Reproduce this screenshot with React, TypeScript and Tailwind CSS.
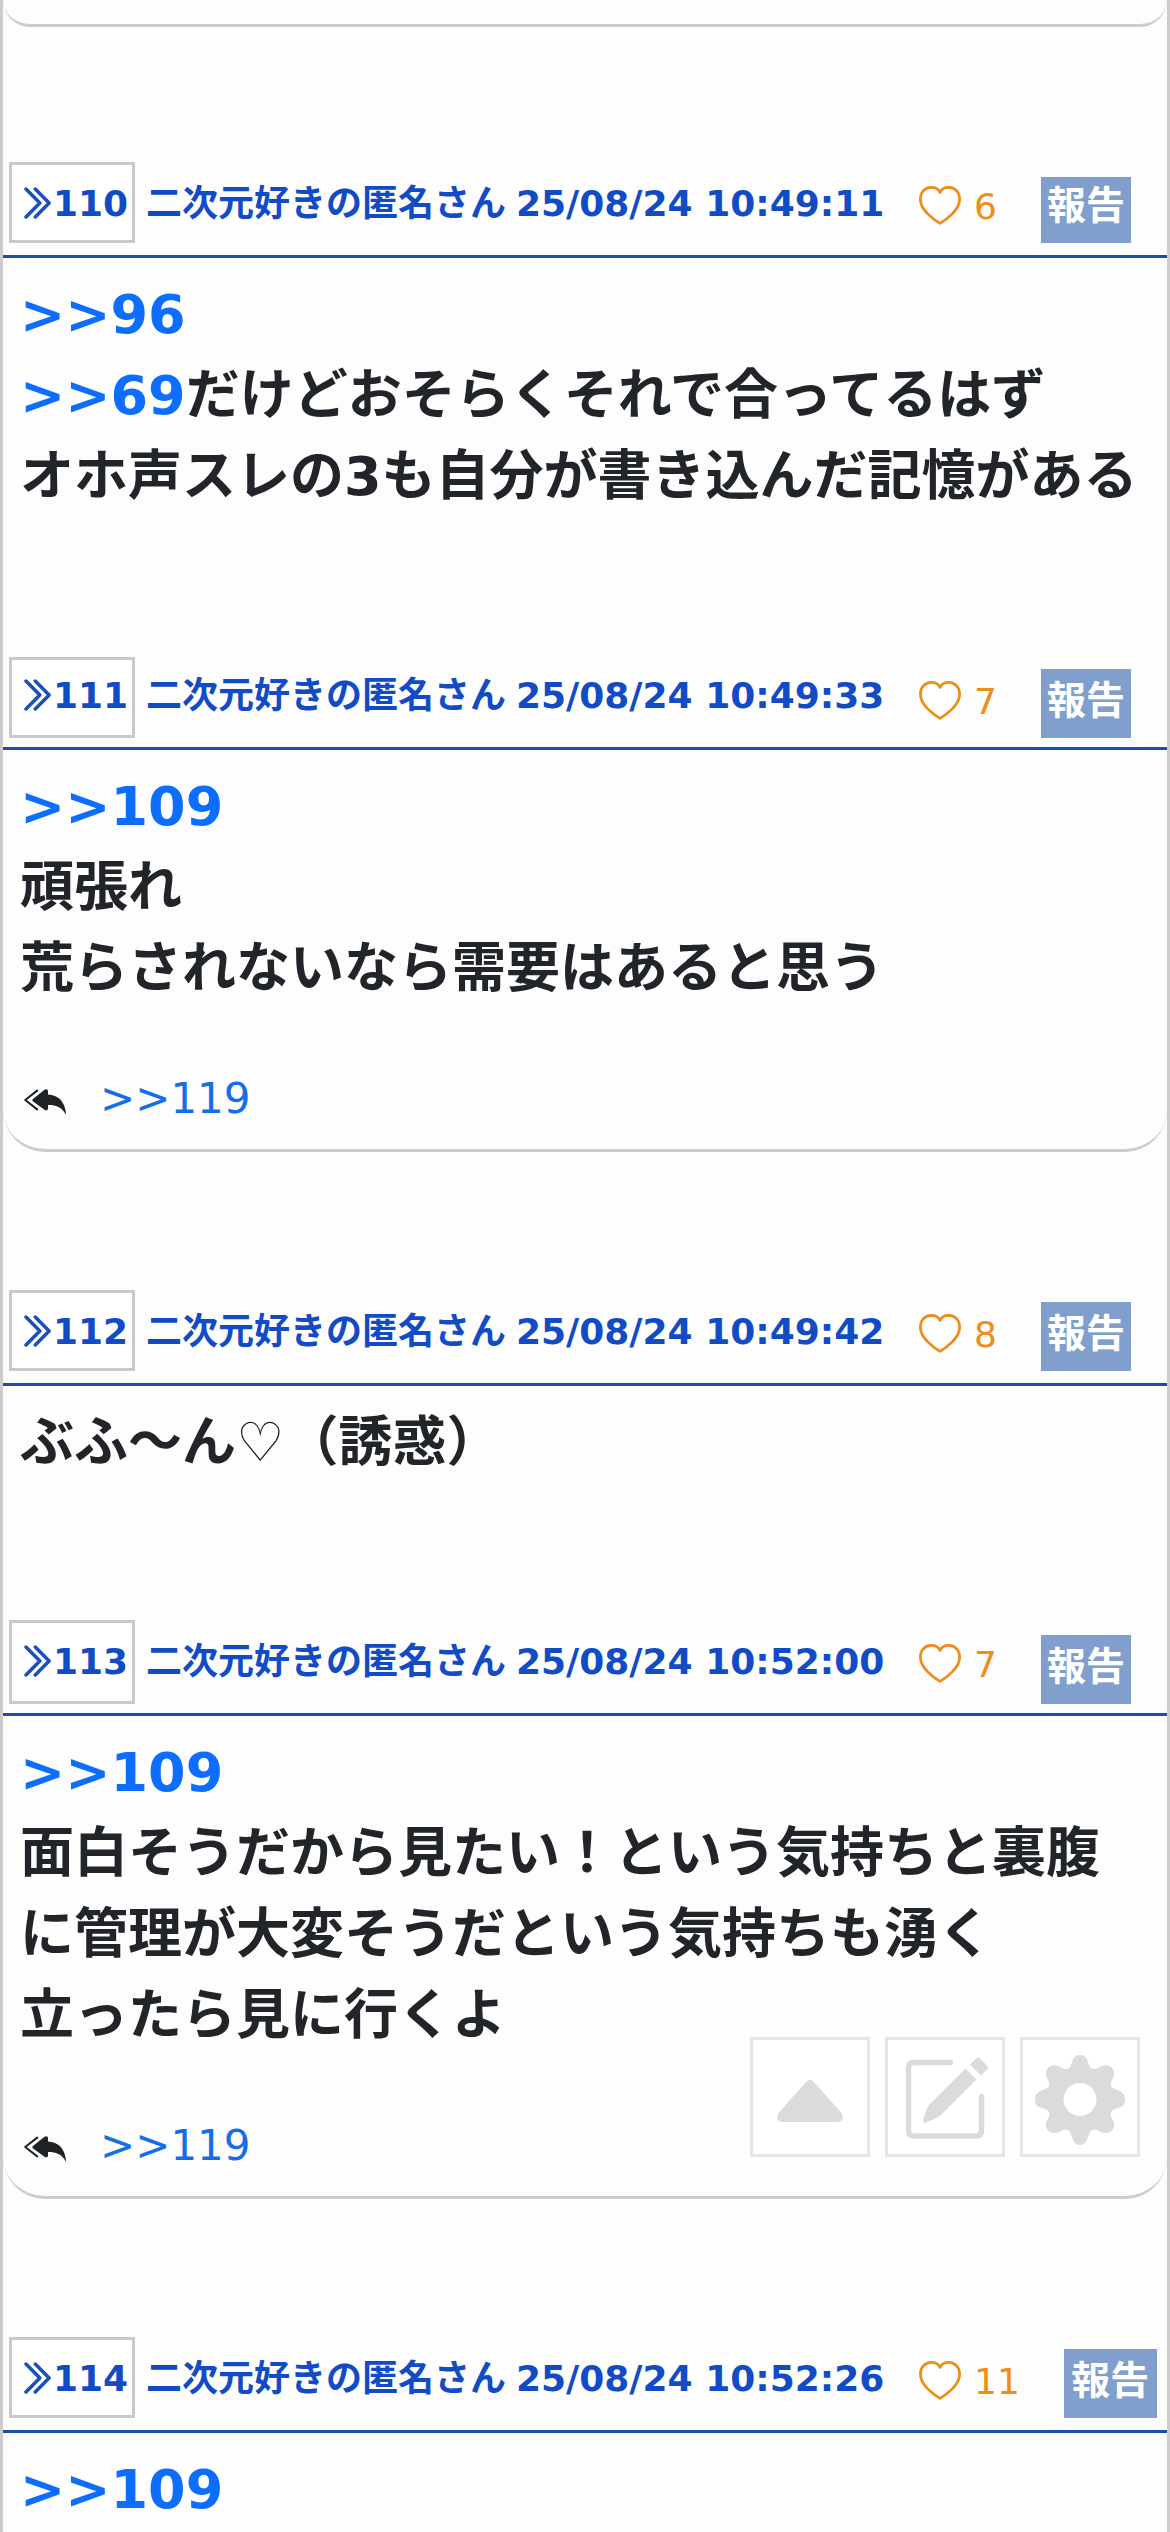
import type { ReactNode } from 'react'

interface PostProps {
  id: number
  time: string
  likes: number
  headerClass?: string
  numberClass?: string
  likesClass?: string
  reportClass?: string
  bodyClass: string
  reply?: string
  children: ReactNode
}

function ChevronsIcon() {
  return (
    <svg className="h-[32px] w-[27px] shrink-0" viewBox="0 0 27 32" fill="none" stroke="#1a50b8" strokeWidth="3.5" strokeLinecap="round" strokeLinejoin="round">
      <path d="M2 2L15.8 16L2 30" />
      <path d="M11.3 2L25.1 16L11.3 30" />
    </svg>
  )
}

function HeartIcon() {
  return (
    <svg className="h-[39px] w-[42px]" viewBox="0 0 42 39" fill="#fff" stroke="#ec8e17" strokeWidth="2.8" strokeLinejoin="round">
      <path d="M21 37.4C14.5 33.5 1.4 24 1.4 13.2C1.4 5.5 6.5 1.4 12.4 1.4C16.5 1.4 19.4 3 21 6.3C22.6 3 25.5 1.4 29.6 1.4C35.5 1.4 40.6 5.5 40.6 13.2C40.6 24 27.5 33.5 21 37.4Z" />
    </svg>
  )
}

function ReplyAllIcon() {
  return (
    <svg className="h-[27px] w-[43px]" viewBox="0 0 43 27">
      <path d="M13.2 1.6L1.2 11L13.2 20.4" fill="none" stroke="#1f2326" strokeWidth="2" strokeLinecap="round" strokeLinejoin="round" />
      <path d="M8.8 12.2Q7.8 11 9 10L20.5 .8Q23.8 -1 24 2.2V5.6C34 6 41 12 42.2 26C38 18.5 33 16 24 16V19.5Q23.6 22.5 20.5 20.8Z" fill="#1f2326" />
    </svg>
  )
}

function Post({
  id,
  time,
  likes,
  headerClass = '',
  numberClass = 'h-[81px] pt-[12px]',
  likesClass = 'mt-[24px]',
  reportClass = 'mt-[12px] h-[69px] w-[90px] leading-[63px]',
  bodyClass,
  reply,
  children,
}: PostProps) {
  return (
    <article className={`border-[#ccc] ${reply ? 'rounded-b-[42px] border-b-[3px]' : ''}`}>
      <header className={`flex h-[96px] items-start border-b-[3px] border-[#1c4dab] pl-1.5 text-[36px] ${headerClass}`}>
        <div className={`flex w-[126px] shrink-0 items-start border-[3px] border-[#c9c9c9] bg-white pl-3 font-bold leading-[54px] text-[#114bc5] ${numberClass}`}>
          <div className="pt-2.5"><ChevronsIcon /></div>
          <span className="ml-0.5">{id}</span>
        </div>
        <div className="mt-[15px] flex w-[784px] shrink-0 gap-2.5 whitespace-nowrap pl-[11px] font-bold leading-[54px] text-[#114bc5]">
          <span>二次元好きの匿名さん</span>
          <time>{time}</time>
        </div>
        <div className={`flex items-start leading-[42px] text-[#ec8e17] ${likesClass}`}>
          <HeartIcon />
          <span className="ml-[13px]">{likes}</span>
        </div>
        <a className={`ml-[44px] shrink-0 bg-[#809fcd] text-center text-[39px] font-bold text-white ${reportClass}`}>報告</a>
      </header>
      <div className={`pl-[17px] pt-4 text-[54px] font-bold leading-[81px] text-[#212529] ${bodyClass}`}>{children}</div>
      {reply && (
        <div className="flex h-[81px] items-start pl-[21px] text-[42px] leading-[61px] text-[#146ee8]">
          <div className="pt-[21px]"><ReplyAllIcon /></div>
          <a className="ml-[33px]">{reply}</a>
        </div>
      )}
    </article>
  )
}

function Ref({ children }: { children: ReactNode }) {
  return <a className="text-[#0d6efd]">{children}</a>
}

function ToolButton({ children }: { children: ReactNode }) {
  return (
    <button type="button" className="flex size-[120px] items-center justify-center border-[3px] border-[#e5e5e5] bg-white">
      {children}
    </button>
  )
}

function FloatingTools() {
  return (
    <nav className="fixed left-[750px] top-[2037px] flex gap-[15px]">
      <ToolButton>
        <svg className="size-[114px]" viewBox="0 0 114 114" fill="#dbdbdb">
          <path d="M53.5 41.5Q57 38 60.5 41.5L88 72.5Q93 80.5 85 82H29Q21 80.5 26 72.5Z" />
        </svg>
      </ToolButton>
      <ToolButton>
        <svg className="size-[114px]" viewBox="0 0 114 114" fill="#dbdbdb">
          <path d="M62.5 22.5H26Q20.5 22.5 20.5 28V90.5Q20.5 96 26 96H88Q93.5 96 93.5 90.5V56.5" fill="none" stroke="#dbdbdb" strokeWidth="5.5" strokeLinecap="round" />
          <path d="M77.5 28.5L88.5 39.5L52 76Q46 79.5 36.5 83Q34.5 82.5 35 81C37 73.5 38.5 68.5 41.5 64.5Z" />
          <path d="M82 24.5L88 18.5Q90 16.5 92 18.5L98.5 25Q101 27.5 99 29.5L93 35.5Z" />
        </svg>
      </ToolButton>
      <ToolButton>
        <svg className="size-[114px]" viewBox="0 0 114 114">
          <path
            fill="#dbdbdb"
            d="M57 15C63 15 64.5 19.5 65.5 23.5C67 29 71 30.5 76 27.5C80 25 85 24 89 28C92 31.5 91.5 36 89 40C86 45 88 48 93 49.5C98 51 102 53 102 60C102 66 98 67 94 68.5C88 70 86 73.5 89 78.5C92 83 92 87 89 90.5C85 94 80 93.5 76 91C71 88 67 90 65.5 95.5C64 100 62 105 57 105C52 105 50 100 48.5 95.5C47 90 43 88 38 91C34 93.5 29 94 25 90.5C22 87 22 83 25 78.5C28 73.5 26 70 20 68.5C16 67 12 66 12 60C12 53 16 51 21 49.5C26 48 28 45 25 40C22.5 36 22 31.5 25 28C29 24 34 25 38 27.5C43 30.5 47 29 48.5 23.5C49.5 19.5 51 15 57 15Z"
          />
          <circle cx="57" cy="59.5" r="16.5" fill="#fff" />
        </svg>
      </ToolButton>
    </nav>
  )
}

export default function App() {
  return (
    <div lang="ja" className="h-[2532px] overflow-hidden border-x-[3px] border-[#ccc] bg-[#fdfdfd] font-['DejaVu_Sans','Noto_Sans_CJK_JP',sans-serif]">
      <div className="h-[27px] rounded-b-[42px] border-b-[3px] border-[#ccc]" />

      <Post
        id={110}
        time="25/08/24 10:49:11"
        likes={6}
        headerClass="mt-[135px]"
        reportClass="mt-[15px] h-[66px] w-[90px] leading-[57px]"
        bodyClass="h-[396px]"
      >
        <Ref>&gt;&gt;96</Ref><br />
        <Ref>&gt;&gt;69</Ref>だけどおそらくそれで合ってるはず<br />
        オホ声スレの3も自分が書き込んだ記憶がある
      </Post>

      <Post
        id={111}
        time="25/08/24 10:49:33"
        likes={7}
        numberClass="mt-[3px] h-[81px] pt-[9px]"
        likesClass="mt-[27px]"
        reportClass="mt-[15px] h-[69px] w-[90px] leading-[63px]"
        bodyClass="h-[318px]"
        reply=">>119"
      >
        <Ref>&gt;&gt;109</Ref><br />
        頑張れ<br />
        荒らされないなら需要はあると思う
      </Post>

      <Post id={112} time="25/08/24 10:49:42" likes={8} headerClass="mt-[138px]" bodyClass="h-[234px]">
        ぶふ～ん♡（誘惑）
      </Post>

      <Post
        id={113}
        time="25/08/24 10:52:00"
        likes={7}
        numberClass="h-[84px] pt-[12px]"
        reportClass="mt-[15px] h-[69px] w-[90px] leading-[63px]"
        bodyClass="h-[399px]"
        reply=">>119"
      >
        <Ref>&gt;&gt;109</Ref><br />
        面白そうだから見たい！という気持ちと裏腹<br />
        に管理が大変そうだという気持ちも湧く<br />
        立ったら見に行くよ
      </Post>

      <Post
        id={114}
        time="25/08/24 10:52:26"
        likes={11}
        headerClass="mt-[138px]"
        reportClass="mt-[12px] h-[69px] w-[93px] leading-[63px]"
        bodyClass=""
      >
        <Ref>&gt;&gt;109</Ref>
      </Post>

      <FloatingTools />
    </div>
  )
}
